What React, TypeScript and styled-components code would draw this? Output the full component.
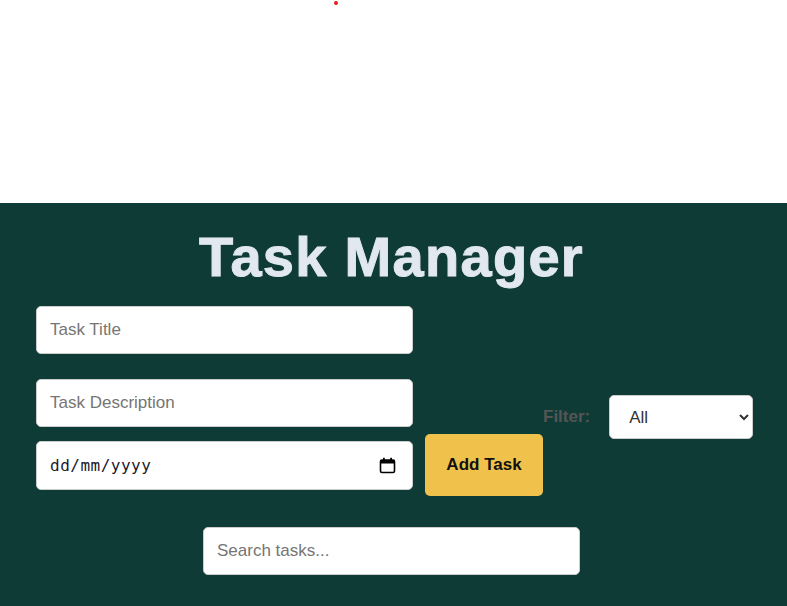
import * as React from 'react';
import styled, { createGlobalStyle } from 'styled-components';

const GlobalStyle = createGlobalStyle`
  body {
    margin: 0;
    background: #fff;
    font-family: "Liberation Sans", Arial, sans-serif;
  }
`;

const TopArea = styled.div`
  height: 203px;
  background: #fff;
  padding-top: 1px;
  box-sizing: border-box;
`;

const Dot = styled.div`
  width: 4px;
  height: 4px;
  margin-left: 334px;
  border-radius: 50%;
  background: #e0201c;
`;

const Section = styled.section`
  background: #0f3b36;
  padding: 21px 4px 40px 0;
  min-height: 420px;
  box-sizing: border-box;
`;

const Heading = styled.h1`
  margin: 0 0 17px;
  text-align: center;
  font-size: 56px;
  font-weight: 700;
  letter-spacing: 1.3px;
  color: #e2e8f0;
  -webkit-text-stroke: 1px #e2e8f0;
`;

const Controls = styled.div`
  display: flex;
  align-items: flex-start;
  padding-left: 36px;
`;

const FormCol = styled.div`
  display: flex;
  flex-direction: column;
`;

const TextInput = styled.input<{ $gap?: number }>`
  width: 377px;
  height: 48px;
  box-sizing: border-box;
  padding: 0 13px;
  margin-bottom: ${p => p.$gap ?? 0}px;
  border: 1px solid #ccc;
  border-radius: 5px;
  background: #fff;
  font-family: "Liberation Sans", Arial, sans-serif;
  font-size: 17px;
  color: #333;
  outline: none;
  &::placeholder {
    color: #757575;
  }
`;

const DateRow = styled.div`
  display: flex;
  align-items: center;
  gap: 12px;
`;

const DateField = styled.div`
  position: relative;
  width: 377px;
  height: 49px;
`;

const DateInput = styled.input`
  width: 100%;
  height: 100%;
  box-sizing: border-box;
  padding: 0 40px 0 13px;
  border: 1px solid #ccc;
  border-radius: 5px;
  background: #fff;
  font-family: "DejaVu Sans Mono", monospace;
  font-size: 16px;
  letter-spacing: 0.5px;
  color: #111;
  outline: none;
  &::placeholder {
    color: #1a1a2e;
  }
`;

const CalendarIcon = styled.svg`
  position: absolute;
  right: 17px;
  top: 16px;
  width: 17px;
  height: 17px;
  pointer-events: none;
`;

const AddButton = styled.button`
  width: 118px;
  height: 62px;
  border: none;
  border-radius: 5px;
  background: #f0c14b;
  color: #111;
  font-family: "Liberation Sans", Arial, sans-serif;
  font-size: 17px;
  font-weight: 700;
  cursor: pointer;
`;

const FilterGroup = styled.div`
  display: flex;
  align-items: center;
  gap: 19px;
  margin-top: 89px;
`;

const FilterLabel = styled.label`
  font-size: 17px;
  font-weight: 700;
  color: #555;
`;

const Select = styled.select`
  width: 144px;
  height: 44px;
  box-sizing: border-box;
  padding: 0 15px;
  border: 1px solid #ccc;
  border-radius: 5px;
  background: #fff;
  font-family: "Liberation Sans", Arial, sans-serif;
  font-size: 17px;
  color: #333;
  outline: none;
`;

const SearchRow = styled.div`
  display: flex;
  justify-content: center;
  margin-top: 31px;
`;

export default function App() {
  const [filter, setFilter] = React.useState('All');
  return (
    <>
      <GlobalStyle />
      <TopArea>
        <Dot />
      </TopArea>
      <Section>
        <Heading>Task Manager</Heading>
        <Controls>
          <FormCol>
            <TextInput type="text" placeholder="Task Title" $gap={25} />
            <TextInput type="text" placeholder="Task Description" $gap={7} />
            <DateRow>
              <DateField>
                <DateInput type="text" placeholder="dd/mm/yyyy" />
                <CalendarIcon viewBox="0 0 17 17">
                  <rect x="1.5" y="3" width="14" height="12.5" rx="1.5" fill="none" stroke="#000" strokeWidth="1.6" />
                  <rect x="1.5" y="3" width="14" height="3.5" fill="#000" />
                  <rect x="4" y="0.8" width="1.8" height="3" fill="#000" />
                  <rect x="11.2" y="0.8" width="1.8" height="3" fill="#000" />
                </CalendarIcon>
              </DateField>
              <AddButton>Add Task</AddButton>
            </DateRow>
          </FormCol>
          <FilterGroup>
            <FilterLabel>Filter:</FilterLabel>
            <Select value={filter} onChange={e => setFilter(e.target.value)}>
              <option value="All">All</option>
              <option value="Completed">Completed</option>
              <option value="Pending">Pending</option>
            </Select>
          </FilterGroup>
        </Controls>
        <SearchRow>
          <TextInput type="text" placeholder="Search tasks..." />
        </SearchRow>
      </Section>
    </>
  );
}
